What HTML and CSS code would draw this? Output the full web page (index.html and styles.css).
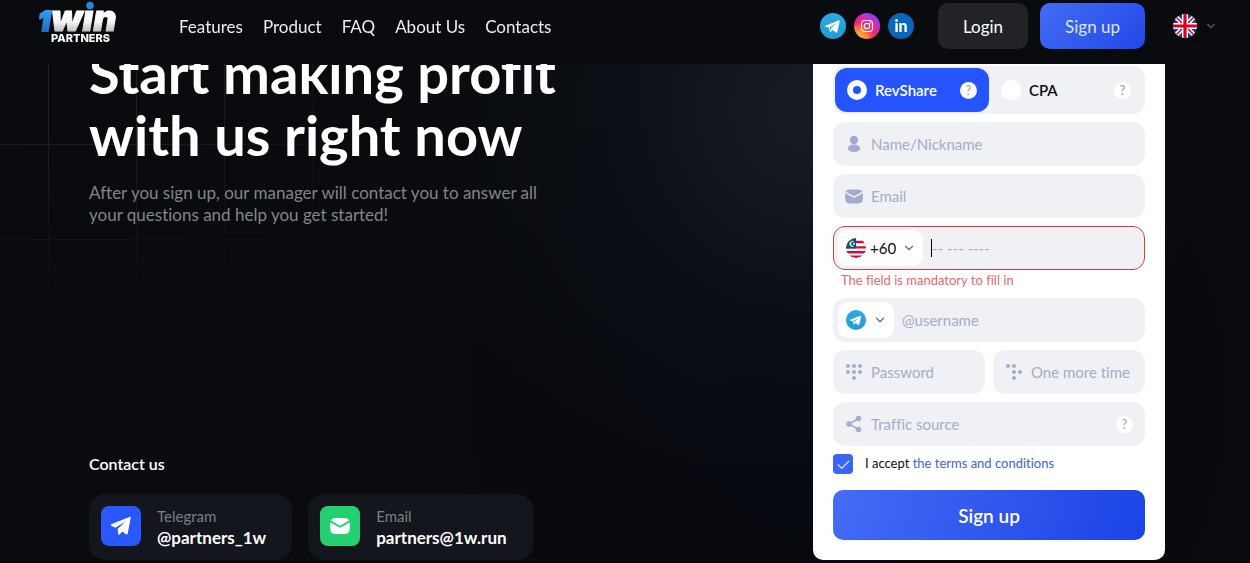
FILE: index.html
```
<!DOCTYPE html>
<html lang="en">
<head>
<meta charset="UTF-8" />
<meta name="viewport" content="width=device-width, initial-scale=1" />
<title>1win Partners</title>
<link rel="stylesheet" href="styles.css">
</head>
<body>
  <!-- Shared icons -->
  <svg class="sprite" width="0" height="0" aria-hidden="true">
    <defs>
      <linearGradient id="tgFill" x1="0" y1="0" x2="0" y2="1">
        <stop offset="0" stop-color="#2aabe4" />
        <stop offset="1" stop-color="#229bd3" />
      </linearGradient>
      <radialGradient id="igFill" cx="0.15" cy="1" r="1.15">
        <stop offset="0" stop-color="#fdc04a" />
        <stop offset="0.3" stop-color="#fb8a2e" />
        <stop offset="0.55" stop-color="#f3226f" />
        <stop offset="0.8" stop-color="#c62fc4" />
        <stop offset="1" stop-color="#6a4bff" />
      </radialGradient>
      <clipPath id="round"><circle cx="12" cy="12" r="12" /></clipPath>
    </defs>
    <symbol id="telegram" viewBox="0 0 26 26">
      <circle cx="13" cy="13" r="13" fill="url(#tgFill)" />
      <path d="M5.2 12.7 18.6 7.4c.7-.2 1.200.2 1 1.100l-2.300 10.500c-.2.8-.7 1-1.300.6l-3.500-2.600-1.700 1.700c-.5.5-.9.3-1-.3l-.7-3.600-3.700-1.200c-.8-.2-.8-.7-.2-.9z" fill="#fff" />
      <path d="m9.600 14.500 6.900-4.500-5.500 5.300-.5 2.400z" fill="#279fd6" />
    </symbol>
    <symbol id="chevron" viewBox="0 0 10 10">
      <path d="m1.500 3.200 3.500 3.500 3.500-3.500" fill="none" stroke="currentColor" stroke-width="1.3" stroke-linecap="round" stroke-linejoin="round" />
    </symbol>
    <symbol id="mail" viewBox="0 0 20 16">
      <path d="M.8 2.600C1.500 1 2.700.3 4.600.2 8.200-.1 11.800-.1 15.400.2c1.900.1 3.100.8 3.800 2.400L10 7.700z" fill="currentColor" />
      <path d="M.3 4.400 9.400 9.400q.6.300 1.200 0l9.100-5c.4 2.600.3 5.100-.1 7.600-.4 2.400-1.700 3.600-4.200 3.800-3.600.3-7.200.3-10.800 0C2.100 15.600.8 14.400.4 12 0 9.500-.1 7 .3 4.400z" fill="currentColor" />
    </symbol>
  </svg>

  <header class="header">
    <a class="logo" href="#" aria-label="1win Partners">
      <svg width="80" height="46" viewBox="0 0 80 46">
        <defs>
          <linearGradient id="oneFill" gradientUnits="userSpaceOnUse" x1="0" y1="8" x2="0" y2="29">
            <stop offset="0" stop-color="#2f9bf5" />
            <stop offset="1" stop-color="#1b6fc0" />
          </linearGradient>
          <linearGradient id="winFill" gradientUnits="userSpaceOnUse" x1="0" y1="8" x2="0" y2="29">
            <stop offset="0" stop-color="#fff" />
            <stop offset="0.5" stop-color="#f6f6f6" />
            <stop offset="1" stop-color="#bcbcbf" />
          </linearGradient>
        </defs>
        <text class="logo-one" x="-2" y="28">1</text>
        <text class="logo-win" x="11" y="28">win</text>
        <!-- blue ball over the dot of the i -->
        <rect x="43" y="-4" width="14" height="11" fill="#090b0e" />
        <circle cx="50" cy="2.500" r="3.800" fill="#2487df" />
        <text class="logo-sub" x="11" y="39">PARTNERS</text>
      </svg>
    </a>
    <nav class="nav">
      <a href="#">Features</a>
      <a href="#">Product</a>
      <a href="#">FAQ</a>
      <a href="#">About Us</a>
      <a href="#">Contacts</a>
    </nav>
    <div class="socials">
      <a href="#" aria-label="Telegram"><svg width="26" height="26"><use href="#telegram" /></svg></a>
      <a href="#" aria-label="Instagram">
        <svg width="26" height="26" viewBox="0 0 26 26">
          <circle cx="13" cy="13" r="13" fill="url(#igFill)" />
          <rect x="7.500" y="7.500" width="11" height="11" rx="3.200" fill="none" stroke="#fff" stroke-width="1.200" />
          <circle cx="13" cy="13" r="2.700" fill="none" stroke="#fff" stroke-width="1.200" />
          <circle cx="16.200" cy="9.800" r="0.800" fill="#fff" />
        </svg>
      </a>
      <a href="#" aria-label="LinkedIn">
        <svg width="26" height="26" viewBox="0 0 26 26">
          <circle cx="13" cy="13" r="13" fill="#0a66b8" />
          <text class="linkedin" x="13" y="19" text-anchor="middle">in</text>
        </svg>
      </a>
    </div>
    <div class="auth">
      <button class="btn btn-login" type="button">Login</button>
      <button class="btn btn-signup" type="button">Sign up</button>
    </div>
    <button class="lang" type="button" aria-label="Language">
      <svg width="24" height="24" viewBox="0 0 24 24">
        <g clip-path="url(#round)">
          <rect width="24" height="24" fill="#16449a" />
          <path d="M0 0 24 24M24 0 0 24" stroke="#fff" stroke-width="4.600" />
          <path d="M0 0 24 24M24 0 0 24" stroke="#d80027" stroke-width="1.500" />
          <path d="M12 0v24M0 12h24" stroke="#fff" stroke-width="6" />
          <path d="M12 0v24M0 12h24" stroke="#d80027" stroke-width="3.200" />
        </g>
      </svg>
      <svg width="10" height="10"><use href="#chevron" /></svg>
    </button>
  </header>

  <main class="hero">
    <section class="intro">
      <div>
        <h1>Start making profit<br>with us right now</h1>
        <p>After you sign up, our manager will contact you to answer all<br>your questions and help you get started!</p>
      </div>
      <div>
        <h2>Contact us</h2>
        <div class="contacts">
          <a class="contact" href="#">
            <span class="contact-icon blue">
              <svg width="22" height="20" viewBox="0 0 22 20">
                <path d="M1.700 8.100 19.500.9c.8-.3 1.400.2 1.200 1.100l-3 15.500c-.2 1-.9 1.200-1.700.7l-3.700-2.800-2.700 3c-.6.7-1.300.500-1.400-.4l-.6-5L15.500 5.500 5.500 11.800 1.600 10.100c-1-.5-.9-1.600.1-2z" fill="#fff" />
              </svg>
            </span>
            <span class="contact-text"><small>Telegram</small><b>@partners_1w</b></span>
          </a>
          <a class="contact" href="#">
            <span class="contact-icon green"><svg width="20" height="16"><use href="#mail" /></svg></span>
            <span class="contact-text"><small>Email</small><b>partners@1w.run</b></span>
          </a>
        </div>
      </div>
    </section>

    <form class="card">
      <div class="plans">
        <div class="plan active">
          <label><input type="radio" name="plan" checked />RevShare</label>
          <button class="help" type="button">?</button>
        </div>
        <div class="plan">
          <label><input type="radio" name="plan" />CPA</label>
          <button class="help" type="button">?</button>
        </div>
      </div>

      <label class="field">
        <svg width="18" height="18" viewBox="0 0 18 18" fill="currentColor">
          <circle cx="9" cy="5" r="4.200" />
          <ellipse cx="9" cy="13.300" rx="6.200" ry="3.700" />
        </svg>
        <input type="text" placeholder="Name/Nickname" />
      </label>

      <label class="field">
        <svg width="18" height="15" viewBox="0 0 20 16"><use href="#mail" /></svg>
        <input type="email" placeholder="Email" />
      </label>

      <div>
        <div class="field error">
          <div class="picker">
            <svg width="20" height="20" viewBox="0 0 24 24">
              <g clip-path="url(#round)">
                <rect width="24" height="24" fill="#fff" />
                <path d="M0 4.800h24M0 11.200h24M0 17h24M0 22.500h24" stroke="#d0103a" stroke-width="2.900" />
                <rect width="12" height="12.500" fill="#0a4f9c" />
                <path d="M9.500 4.300a3.300 3.300 0 1 0 0 5.400 2.800 2.800 0 1 1 0-5.400z" fill="#f5e27a" stroke="#f5e27a" stroke-width="0.600" />
                <circle cx="9.500" cy="7" r="1.300" fill="#f5e27a" />
              </g>
            </svg>
            <select aria-label="Country code"><option>+60</option></select>
            <svg class="arrow" width="10" height="10"><use href="#chevron" /></svg>
          </div>
          <span class="caret"></span>
          <input type="tel" placeholder="-- --- ----" aria-label="Phone" />
        </div>
        <p class="message">The field is mandatory to fill in</p>
      </div>

      <div class="field">
        <button class="picker messenger" type="button" aria-label="Messenger">
          <svg width="20" height="20"><use href="#telegram" /></svg>
          <svg class="arrow" width="10" height="10"><use href="#chevron" /></svg>
        </button>
        <input type="text" placeholder="@username" aria-label="Username" />
      </div>

      <div class="pair">
        <label class="field">
          <svg width="18" height="18" viewBox="0 0 18 18" fill="currentColor">
            <circle cx="3" cy="3" r="2" /><circle cx="9" cy="3" r="2" /><circle cx="15" cy="3" r="2" />
            <circle cx="3" cy="9" r="2" /><circle cx="9" cy="9" r="2" /><circle cx="15" cy="9" r="2" />
            <circle cx="9" cy="15" r="2" />
          </svg>
          <input type="password" placeholder="Password" />
        </label>
        <label class="field">
          <svg width="18" height="18" viewBox="0 0 18 18" fill="currentColor">
            <circle cx="3" cy="3" r="2" /><circle cx="9" cy="3" r="2" />
            <circle cx="9" cy="9" r="2" /><circle cx="15" cy="9" r="2" />
            <circle cx="9" cy="15" r="2" />
          </svg>
          <input type="password" placeholder="One more time" />
        </label>
      </div>

      <div class="field">
        <svg width="18" height="18" viewBox="0 0 18 18" fill="currentColor">
          <path d="M13.500 3.500 4 9l9.500 5.500" fill="none" stroke="currentColor" stroke-width="1.500" />
          <circle cx="13.500" cy="3.500" r="2.700" /><circle cx="4" cy="9" r="2.700" /><circle cx="13.500" cy="14.500" r="2.700" />
        </svg>
        <input type="text" placeholder="Traffic source" aria-label="Traffic source" />
        <button class="help" type="button">?</button>
      </div>

      <div class="terms">
        <input type="checkbox" id="accept" checked />
        <label for="accept">I accept <a href="#">the terms and conditions</a></label>
      </div>

      <button class="btn btn-submit" type="submit">Sign up</button>
    </form>
  </main>
</body>
</html>
```
FILE: styles.css
```
* {
  box-sizing: border-box;
}
body {
  margin: 0;
  font-family: Lato, "Open Sans", sans-serif;
  font-size: 17px;
  font-variant-ligatures: no-common-ligatures;
  color: #fff;
  background: #090b0e;
}
h1, h2, p {
  margin: 0;
}
a {
  color: inherit;
  text-decoration: none;
}
button, input, select {
  font: inherit;
  color: inherit;
  border: none;
  padding: 0;
  margin: 0;
  background: none;
}
button {
  cursor: pointer;
}
svg {
  display: block;
  flex-shrink: 0;
}
.sprite {
  position: absolute;
}
/* Header */
.header {
  position: fixed;
  top: 0;
  left: 0;
  right: 0;
  z-index: 10;
  height: 64px;
  padding: 3px 34px 15px 40px;
  display: flex;
  align-items: center;
  background: #090b0e;
}
.logo svg {
  overflow: visible;
}
.logo-one {
  font: italic 900 27px Inter, sans-serif;
  fill: url(#oneFill);
  stroke: url(#oneFill);
  stroke-width: 2px;
  stroke-linejoin: round;
}
.logo-win {
  font: italic 900 36px Inter, sans-serif;
  fill: url(#winFill);
  stroke: url(#winFill);
  stroke-width: 1px;
  stroke-linejoin: round;
}
.logo-sub {
  font: 800 11px Inter, sans-serif;
  fill: #fff;
}
.linkedin {
  font: 900 16px Lato, sans-serif;
  fill: #fff;
}
.nav {
  display: flex;
  gap: 20px;
  margin-left: 59px;
  color: #eceded;
}
.socials {
  display: flex;
  gap: 8px;
  margin-left: auto;
}
.auth {
  display: flex;
  gap: 12px;
  margin: 0 28px 0 24px;
}
.btn {
  height: 46px;
  padding: 0 25px;
  border-radius: 10px;
}
.btn-login {
  background: #212326;
}
.btn-signup {
  background: linear-gradient(135deg, #446cf5, #2148e8);
  color: #dfe6fd;
}
.lang {
  display: flex;
  align-items: center;
  gap: 9px;
  color: #55575b;
}
/* Hero */
.hero {
  position: relative;
  min-height: 100vh;
  padding: 0 85px 3px 89px;
  display: grid;
  grid-template-columns: 1fr 352px;
  background:
    radial-gradient(ellipse 400px 400px at 810px 110px, #171c24, rgba(14, 18, 25, 0.6) 50%, transparent),
    radial-gradient(ellipse 500px 500px at 850px 400px, #070911, transparent),
    #090b0e;
}
/* faint grid behind the title */
.hero::before {
  content: "";
  position: absolute;
  inset: 0;
  background:
    linear-gradient(90deg, #1d2024 1px, transparent 1px) 48px 0 / 88px 95px,
    linear-gradient(#1d2024 1px, transparent 1px) 0 49px / 88px 95px;
  mask-image: radial-gradient(ellipse 340px 240px at 80px 70px, #000 30%, transparent);
}
.intro {
  position: relative;
  padding-top: 42px;
  display: flex;
  flex-direction: column;
  justify-content: space-between;
}
h1 {
  font-size: 56px;
  line-height: 62px;
  font-weight: 700;
}
.intro p {
  margin-top: 16px;
  line-height: 22px;
  color: #82858a;
}
h2 {
  font-size: 16px;
  line-height: 20px;
  font-weight: 600;
}
.contacts {
  display: flex;
  gap: 16px;
  margin-top: 20px;
}
.contact {
  display: flex;
  gap: 16px;
  height: 66px;
  padding: 12px 26px 12px 12px;
  border-radius: 16px;
  background: #13161c;
}
.contact-icon {
  width: 40px;
  height: 40px;
  border-radius: 8px;
  display: grid;
  place-items: center;
}
.blue {
  background: #2b57ff;
}
.green {
  background: #25d070;
}
.contact-text {
  display: flex;
  flex-direction: column;
  line-height: 21px;
}
.contact-text small {
  font-size: 15px;
  color: #7c7f84;
}
/* Form */
.card {
  position: relative;
  display: flex;
  flex-direction: column;
  gap: 8px;
  padding: 66px 20px 20px;
  border-radius: 0 0 10px 10px;
  background: #fff;
  color: #0b0d11;
  font-size: 15px;
}
.plans {
  display: grid;
  grid-template-columns: 1fr 1fr;
  padding: 2px;
  border-radius: 12px;
  background: #f0f1f5;
}
.plan {
  height: 44px;
  padding: 0 12px;
  border-radius: 12px;
  display: flex;
  align-items: center;
  justify-content: space-between;
  font-weight: 600;
}
.plan.active {
  background: #2554ff;
  color: #fff;
}
.plan label {
  display: flex;
  align-items: center;
  gap: 8px;
}
.plan input {
  appearance: none;
  width: 20px;
  height: 20px;
  border-radius: 50%;
  background: #fff;
}
.plan input:checked {
  border: 6px solid #fff;
  background: #2554ff;
}
.help {
  width: 17px;
  height: 17px;
  border-radius: 50%;
  background: #fff;
  color: #a3a6b4;
  font-size: 13px;
  line-height: 17px;
  flex-shrink: 0;
}
.field {
  height: 44px;
  padding: 0 12px;
  border-radius: 12px;
  display: flex;
  align-items: center;
  gap: 8px;
  background: #f0f1f5;
  color: #a4abd0;
}
.field input {
  flex: 1;
  min-width: 0;
  outline: none;
  color: #0b0d11;
}
.field input::placeholder {
  color: #a4abcb;
  opacity: 1;
}
.field.error {
  border: 1px solid #dd3d3a;
}
.field:has(.picker) {
  padding-left: 5px;
}
.field.error:has(.picker) {
  padding-left: 4px;
}
.picker {
  height: 36px;
  padding: 0 9px 0 8px;
  border-radius: 10px;
  display: flex;
  align-items: center;
  gap: 4px;
  background: #fff;
  color: #0b0d11;
}
.picker select {
  appearance: none;
  width: 30px;
}
.picker .arrow {
  color: #6d7077;
}
.messenger {
  gap: 9px;
}
.caret {
  width: 1px;
  height: 18px;
  margin-right: -8px;
  background: #000;
}
.message {
  padding-left: 8px;
  font-size: 13px;
  line-height: 20px;
  color: #e5686c;
}
.pair {
  display: grid;
  grid-template-columns: repeat(2, minmax(0, 1fr));
  gap: 8px;
}
.terms {
  display: flex;
  gap: 12px;
  height: 20px;
  font-size: 13px;
  line-height: 18px;
}
.terms input {
  appearance: none;
  width: 20px;
  height: 20px;
  border-radius: 4px;
  background: #3b66f5;
  display: grid;
  place-items: center;
}
.terms input:checked::before {
  content: "";
  width: 10px;
  height: 5px;
  margin-bottom: 3px;
  border: solid #fff;
  border-width: 0 0 1px 1px;
  transform: rotate(-45deg);
}
.terms a {
  color: #3d62dc;
}
.btn-submit {
  height: 50px;
  margin-top: 8px;
  font-size: 19px;
  font-weight: 600;
  color: #fff;
  background: linear-gradient(110deg, #446cf5, #1c43e6);
}
```
